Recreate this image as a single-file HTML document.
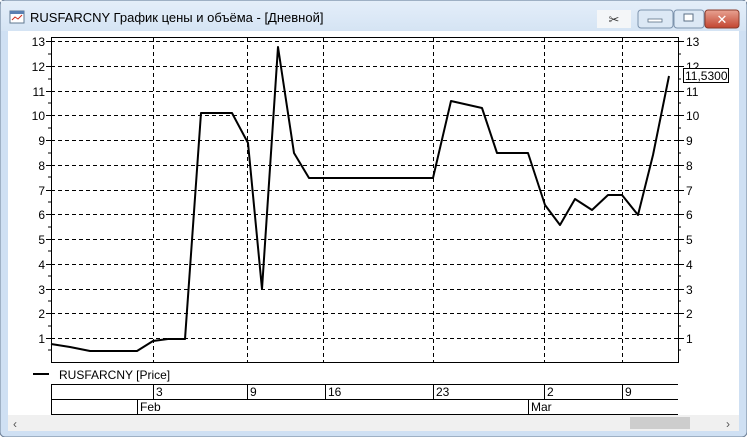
<!DOCTYPE html>
<html><head><meta charset="utf-8"><style>
html,body{margin:0;padding:0;width:747px;height:437px;overflow:hidden;background:#fff}
body{font-family:"Liberation Sans","DejaVu Sans",sans-serif}
</style></head><body>
<svg width="747" height="437" xmlns="http://www.w3.org/2000/svg" font-family="Liberation Sans, DejaVu Sans, sans-serif">
<defs><linearGradient id="tb" x1="0" y1="0" x2="0" y2="1"><stop offset="0" stop-color="#e4eef9"/><stop offset="1" stop-color="#d5e4f4"/></linearGradient>
<linearGradient id="cl" x1="0" y1="0" x2="0" y2="1"><stop offset="0" stop-color="#e8a393"/><stop offset="1" stop-color="#c24530"/></linearGradient></defs>
<rect x="0" y="0" width="747" height="437" rx="5" fill="#cfe0f3" stroke="#6d7f96"/>
<rect x="1" y="1" width="745" height="30" fill="url(#tb)"/>
<!-- icon -->
<rect x="10" y="11" width="14" height="12" fill="#fff" stroke="#607890"/>
<rect x="10" y="11" width="14" height="3" fill="#5a7fb0"/>
<path d="M12 20 L15 17 L18 19 L22 15" stroke="#d03020" fill="none"/>
<text x="30" y="22" font-size="13" fill="#000" font-family="Liberation Sans, DejaVu Sans, sans-serif">RUSFARCNY График цены и объёма - [Дневной]</text>
<!-- buttons -->
<rect x="597" y="10" width="34" height="18" fill="#f4f6f8"/>
<text x="614" y="24" font-size="13" text-anchor="middle" fill="#333">✂</text>
<rect x="638" y="10" width="35" height="18" rx="3" fill="#dce8f5" stroke="#7d93ad"/>
<rect x="648" y="19" width="14" height="3" fill="#fff" stroke="#5b6f86" stroke-width="0.8"/>
<rect x="674" y="10" width="30" height="18" rx="3" fill="#dce8f5" stroke="#7d93ad"/>
<rect x="684" y="14" width="9" height="7" fill="#fff" stroke="#5b6f86"/>
<rect x="705" y="10" width="34" height="18" rx="3" fill="url(#cl)" stroke="#8a3a2a"/>
<text x="722" y="24" font-size="13" font-weight="bold" text-anchor="middle" fill="#fff">✕</text>
<!-- client -->
<rect x="8" y="31" width="731" height="385" fill="#fff"/>
<rect x="8" y="415" width="731" height="16" fill="#f0f0f0"/>
<rect x="630" y="417" width="60" height="12" fill="#cdcdcd"/>
<text x="13" y="428" font-size="12" fill="#555">‹</text>
<text x="726" y="428" font-size="12" fill="#555">›</text>
<g stroke="#000" stroke-width="1" stroke-dasharray="4,3" fill="none">
<path d="M51 41.5H678M51 66.5H678M51 91.5H678M51 115.5H678M51 140.5H678M51 165.5H678M51 190.5H678M51 214.5H678M51 239.5H678M51 264.5H678M51 289.5H678M51 313.5H678M51 338.5H678"/>
<path d="M153.5 38V362M247.5 38V362M323.5 38V362M433.5 38V362M544.5 38V362M622.5 38V362"/>
</g>
<rect x="51.5" y="37.5" width="627" height="325" fill="none" stroke="#000"/>
<g stroke="#000" fill="none">
<path d="M46 41.5H51M46 66.5H51M46 91.5H51M46 115.5H51M46 140.5H51M46 165.5H51M46 190.5H51M46 214.5H51M46 239.5H51M46 264.5H51M46 289.5H51M46 313.5H51M46 338.5H51"/>
<path d="M678 41.5H684M678 66.5H684M678 91.5H684M678 115.5H684M678 140.5H684M678 165.5H684M678 190.5H684M678 214.5H684M678 239.5H684M678 264.5H684M678 289.5H684M678 313.5H684M678 338.5H684"/>
<path d="M48 54H51M48 79H51M48 103H51M48 128H51M48 153H51M48 177H51M48 202H51M48 227H51M48 251H51M48 276H51M48 301H51M48 326H51M48 350H51"/>
<path d="M678 54H681M678 79H681M678 103H681M678 128H681M678 153H681M678 177H681M678 202H681M678 227H681M678 251H681M678 276H681M678 301H681M678 326H681M678 350H681"/>
</g>
<g font-size="12" fill="#000" text-anchor="end">
<text x="45" y="46">13</text><text x="45" y="71">12</text><text x="45" y="96">11</text><text x="45" y="120">10</text><text x="45" y="145">9</text><text x="45" y="170">8</text><text x="45" y="195">7</text><text x="45" y="219">6</text><text x="45" y="244">5</text><text x="45" y="269">4</text><text x="45" y="294">3</text><text x="45" y="318">2</text><text x="45" y="343">1</text>
</g>
<g font-size="12" fill="#000">
<text x="686" y="46">13</text><text x="686" y="71">12</text><text x="686" y="96">11</text><text x="686" y="120">10</text><text x="686" y="145">9</text><text x="686" y="170">8</text><text x="686" y="195">7</text><text x="686" y="219">6</text><text x="686" y="244">5</text><text x="686" y="269">4</text><text x="686" y="294">3</text><text x="686" y="318">2</text><text x="686" y="343">1</text>
</g>
<rect x="683.5" y="68.5" width="45" height="14" fill="#fff" stroke="#000"/>
<text x="685" y="80" font-size="12">11,5300</text>
<polyline fill="none" stroke="#000" stroke-width="2" stroke-linejoin="round" points="51,344 70,347 90,351 137,351 153,341 168,339 185,339 201,113 232,113 248,143 262,289 278,47 294,153 309,178 433,178 451,101 482,108 497,153 528,153 545,205 560,225 575,199 592,210 608,195 622,195 638,215 653,155 669,76"/>
<!-- legend -->
<path d="M33 374H49" stroke="#000" stroke-width="2"/>
<text x="59" y="379" font-size="12" fill="#000">RUSFARCNY [Price]</text>
<!-- date axis -->
<g stroke="#000" fill="none">
<path d="M51.5 384.5H678M51.5 399.5H678M51.5 414.5H678M51.5 384V415"/>
<path d="M153.5 384V399M247.5 384V399M325.5 384V399M433.5 384V399M544.5 384V399M622.5 384V399M137.5 399V414M528.5 399V414"/>
</g>
<g font-size="12" fill="#000">
<text x="156" y="396">3</text><text x="250" y="396">9</text><text x="328" y="396">16</text><text x="436" y="396">23</text><text x="547" y="396">2</text><text x="625" y="396">9</text>
<text x="140" y="411">Feb</text><text x="531" y="411">Mar</text>
</g>
</svg>
</body></html>
